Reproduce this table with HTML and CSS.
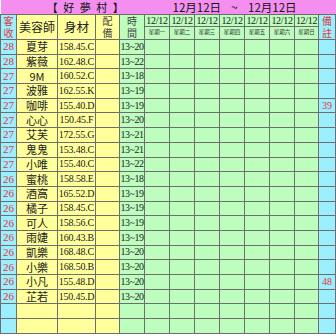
FILE: index.html
```html
<!DOCTYPE html>
<html>
<head>
<meta charset="utf-8">
<link rel="stylesheet" href="styles.css">
</head>
<body>
<table class="sheet">
  <colgroup>
    <col class="c-no"><col class="c-name"><col class="c-body"><col class="c-eq"><col class="c-time">
    <col class="c-day"><col class="c-day"><col class="c-day"><col class="c-day"><col class="c-day"><col class="c-day"><col class="c-day7">
    <col class="c-note">
  </colgroup>
  <tr class="r-title">
    <td class="title" colspan="6">【 好 夢 村 】</td>
    <td class="date" colspan="7">12月12日<span class="tilde">~</span>12月12日</td>
  </tr>
  <tr class="r-h1">
    <td class="blue red hd2" rowspan="2">客<br>收</td>
    <td class="yellow hname" rowspan="2">美容師</td>
    <td class="yellow hbody" rowspan="2">身材</td>
    <td class="yellow hd2 grey" rowspan="2">配<br>備</td>
    <td class="green hd2 grey" rowspan="2">時<br>間</td>
    <td class="green dt">12/12</td><td class="green dt">12/12</td><td class="green dt">12/12</td><td class="green dt">12/12</td><td class="green dt">12/12</td><td class="green dt">12/12</td><td class="green dt">12/12</td>
    <td class="blue red hd2" rowspan="2">備<br>註</td>
  </tr>
  <tr class="r-h2">
    <td class="green wk">星期一</td><td class="green wk">星期二</td><td class="green wk">星期三</td><td class="green wk">星期四</td><td class="green wk">星期五</td><td class="green wk">星期六</td><td class="green wk">星期日</td>
  </tr>
  <tr class="row"><td class="blue num">28</td><td class="yellow nm">夏芽</td><td class="yellow bd">158.45.C</td><td class="yellow"></td><td class="green tm">13~20</td><td class="green"></td><td class="green"></td><td class="green"></td><td class="green"></td><td class="green"></td><td class="green"></td><td class="green"></td><td class="blue note"></td></tr>
  <tr class="row"><td class="blue num">28</td><td class="yellow nm">紫薇</td><td class="yellow bd">162.48.C</td><td class="yellow"></td><td class="green tm">13~22</td><td class="green"></td><td class="green"></td><td class="green"></td><td class="green"></td><td class="green"></td><td class="green"></td><td class="green"></td><td class="blue note"></td></tr>
  <tr class="row"><td class="blue num">27</td><td class="yellow nm">9M</td><td class="yellow bd">160.52.C</td><td class="yellow"></td><td class="green tm">13~18</td><td class="green"></td><td class="green"></td><td class="green"></td><td class="green"></td><td class="green"></td><td class="green"></td><td class="green"></td><td class="blue note"></td></tr>
  <tr class="row"><td class="blue num">27</td><td class="yellow nm">波雅</td><td class="yellow bd">162.55.K</td><td class="yellow"></td><td class="green tm">13~19</td><td class="green"></td><td class="green"></td><td class="green"></td><td class="green"></td><td class="green"></td><td class="green"></td><td class="green"></td><td class="blue note"></td></tr>
  <tr class="row"><td class="blue num">27</td><td class="yellow nm">咖啡</td><td class="yellow bd">155.40.D</td><td class="yellow"></td><td class="green tm">13~19</td><td class="green"></td><td class="green"></td><td class="green"></td><td class="green"></td><td class="green"></td><td class="green"></td><td class="green"></td><td class="blue note">39</td></tr>
  <tr class="row"><td class="blue num">27</td><td class="yellow nm">心心</td><td class="yellow bd">150.45.F</td><td class="yellow"></td><td class="green tm">13~20</td><td class="green"></td><td class="green"></td><td class="green"></td><td class="green"></td><td class="green"></td><td class="green"></td><td class="green"></td><td class="blue note"></td></tr>
  <tr class="row"><td class="blue num">27</td><td class="yellow nm">艾芙</td><td class="yellow bd">172.55.G</td><td class="yellow"></td><td class="green tm">13~21</td><td class="green"></td><td class="green"></td><td class="green"></td><td class="green"></td><td class="green"></td><td class="green"></td><td class="green"></td><td class="blue note"></td></tr>
  <tr class="row"><td class="blue num">27</td><td class="yellow nm">鬼鬼</td><td class="yellow bd">153.48.C</td><td class="yellow"></td><td class="green tm">13~21</td><td class="green"></td><td class="green"></td><td class="green"></td><td class="green"></td><td class="green"></td><td class="green"></td><td class="green"></td><td class="blue note"></td></tr>
  <tr class="row"><td class="blue num">27</td><td class="yellow nm">小唯</td><td class="yellow bd">155.40.C</td><td class="yellow"></td><td class="green tm">13~22</td><td class="green"></td><td class="green"></td><td class="green"></td><td class="green"></td><td class="green"></td><td class="green"></td><td class="green"></td><td class="blue note"></td></tr>
  <tr class="row"><td class="blue num">26</td><td class="yellow nm">蜜桃</td><td class="yellow bd">158.58.E</td><td class="yellow"></td><td class="green tm">13~18</td><td class="green"></td><td class="green"></td><td class="green"></td><td class="green"></td><td class="green"></td><td class="green"></td><td class="green"></td><td class="blue note"></td></tr>
  <tr class="row"><td class="blue num">26</td><td class="yellow nm">酒窩</td><td class="yellow bd">165.52.D</td><td class="yellow"></td><td class="green tm">13~19</td><td class="green"></td><td class="green"></td><td class="green"></td><td class="green"></td><td class="green"></td><td class="green"></td><td class="green"></td><td class="blue note"></td></tr>
  <tr class="row"><td class="blue num">26</td><td class="yellow nm">橘子</td><td class="yellow bd">158.45.C</td><td class="yellow"></td><td class="green tm">13~19</td><td class="green"></td><td class="green"></td><td class="green"></td><td class="green"></td><td class="green"></td><td class="green"></td><td class="green"></td><td class="blue note"></td></tr>
  <tr class="row"><td class="blue num">26</td><td class="yellow nm">可人</td><td class="yellow bd">158.56.C</td><td class="yellow"></td><td class="green tm">13~19</td><td class="green"></td><td class="green"></td><td class="green"></td><td class="green"></td><td class="green"></td><td class="green"></td><td class="green"></td><td class="blue note"></td></tr>
  <tr class="row"><td class="blue num">26</td><td class="yellow nm">雨婕</td><td class="yellow bd">160.43.B</td><td class="yellow"></td><td class="green tm">13~19</td><td class="green"></td><td class="green"></td><td class="green"></td><td class="green"></td><td class="green"></td><td class="green"></td><td class="green"></td><td class="blue note"></td></tr>
  <tr class="row"><td class="blue num">26</td><td class="yellow nm">凱樂</td><td class="yellow bd">168.48.C</td><td class="yellow"></td><td class="green tm">13~20</td><td class="green"></td><td class="green"></td><td class="green"></td><td class="green"></td><td class="green"></td><td class="green"></td><td class="green"></td><td class="blue note"></td></tr>
  <tr class="row"><td class="blue num">26</td><td class="yellow nm">小樂</td><td class="yellow bd">168.50.B</td><td class="yellow"></td><td class="green tm">13~20</td><td class="green"></td><td class="green"></td><td class="green"></td><td class="green"></td><td class="green"></td><td class="green"></td><td class="green"></td><td class="blue note"></td></tr>
  <tr class="row"><td class="blue num">26</td><td class="yellow nm">小凡</td><td class="yellow bd">155.48.D</td><td class="yellow"></td><td class="green tm">13~20</td><td class="green"></td><td class="green"></td><td class="green"></td><td class="green"></td><td class="green"></td><td class="green"></td><td class="green"></td><td class="blue note">48</td></tr>
  <tr class="row"><td class="blue num">26</td><td class="yellow nm">芷若</td><td class="yellow bd">150.45.D</td><td class="yellow"></td><td class="green tm">13~20</td><td class="green"></td><td class="green"></td><td class="green"></td><td class="green"></td><td class="green"></td><td class="green"></td><td class="green"></td><td class="blue note"></td></tr>
  <tr class="row"><td class="blue num"></td><td class="yellow nm"></td><td class="yellow bd"></td><td class="yellow"></td><td class="green tm"></td><td class="green"></td><td class="green"></td><td class="green"></td><td class="green"></td><td class="green"></td><td class="green"></td><td class="green"></td><td class="blue note"></td></tr>
  <tr class="row"><td class="blue num"></td><td class="yellow nm"></td><td class="yellow bd"></td><td class="yellow"></td><td class="green tm"></td><td class="green"></td><td class="green"></td><td class="green"></td><td class="green"></td><td class="green"></td><td class="green"></td><td class="green"></td><td class="blue note"></td></tr>
</table>
</body>
</html>
```

FILE: styles.css
```css
html, body {
  margin: 0;
  padding: 0;
  background: #ffffff;
}
.sheet {
  border-collapse: collapse;
  table-layout: fixed;
  width: 336px;
  font-family: "Liberation Serif", "Noto Sans CJK TC", serif;
  color: #222;
}
.c-no { width: 16px; }
.c-name { width: 41px; }
.c-body { width: 38px; }
.c-eq { width: 24px; }
.c-time { width: 25px; }
.c-day { width: 25px; }
.c-day7 { width: 24px; }
.c-note { width: 17px; }

.sheet td {
  border: 1px solid #6e6e6e;
  padding: 0;
  overflow: hidden;
  white-space: nowrap;
  line-height: 1;
  text-align: center;
  vertical-align: middle;
}
.r-title td {
  background: #f48ff0;
  height: 14px;
  border-left: none;
  border-right: none;
  border-top: none;
  font-family: "Noto Sans CJK TC", sans-serif;
  color: #111;
  line-height: 14px;
  overflow: visible;
}
.r-title .title {
  font-size: 11px;
  letter-spacing: 1.5px;
  text-align: center;
  padding-left: 2px;
}
.r-title .date {
  font-size: 11.5px;
  text-align: left;
  padding-left: 3px;
}
.tilde {
  display: inline-block;
  width: 27px;
  text-align: center;
}
.r-h1 td { height: 11px; }
.r-h2 td { height: 12px; }
.row td { height: 13.7px; }

.blue { background: #9cefff; }
.yellow { background: #ffff9c; }
.green { background: #bdfdbd; }
.red { color: #e0343c; }
.grey { color: #444; }

.sheet td.hd2 {
  font-family: "Noto Sans CJK TC", sans-serif;
  font-size: 10px;
  line-height: 12px;
  overflow: visible;
}
.hname {
  font-family: "Noto Sans CJK TC", sans-serif;
  font-size: 12px;
}
.hbody {
  font-family: "Noto Sans CJK TC", sans-serif;
  font-size: 12.5px;
}
.dt {
  font-size: 10px;
  letter-spacing: -0.3px;
}
.wk {
  font-family: "Noto Sans CJK TC", sans-serif;
  font-size: 5.5px;
  color: #333;
}
.num {
  color: #e0343c;
  font-size: 11px;
  text-align: right;
  padding-right: 1px;
}
.nm {
  font-family: "Noto Sans CJK TC", sans-serif;
  font-size: 11px;
}
.bd {
  font-size: 10px;
  letter-spacing: -0.2px;
}
.sheet td.tm {
  font-size: 10px;
  letter-spacing: -0.5px;
  overflow: visible;
}
.note {
  color: #e0343c;
  font-size: 10px;
  text-align: left;
  padding-left: 2px;
}
```
